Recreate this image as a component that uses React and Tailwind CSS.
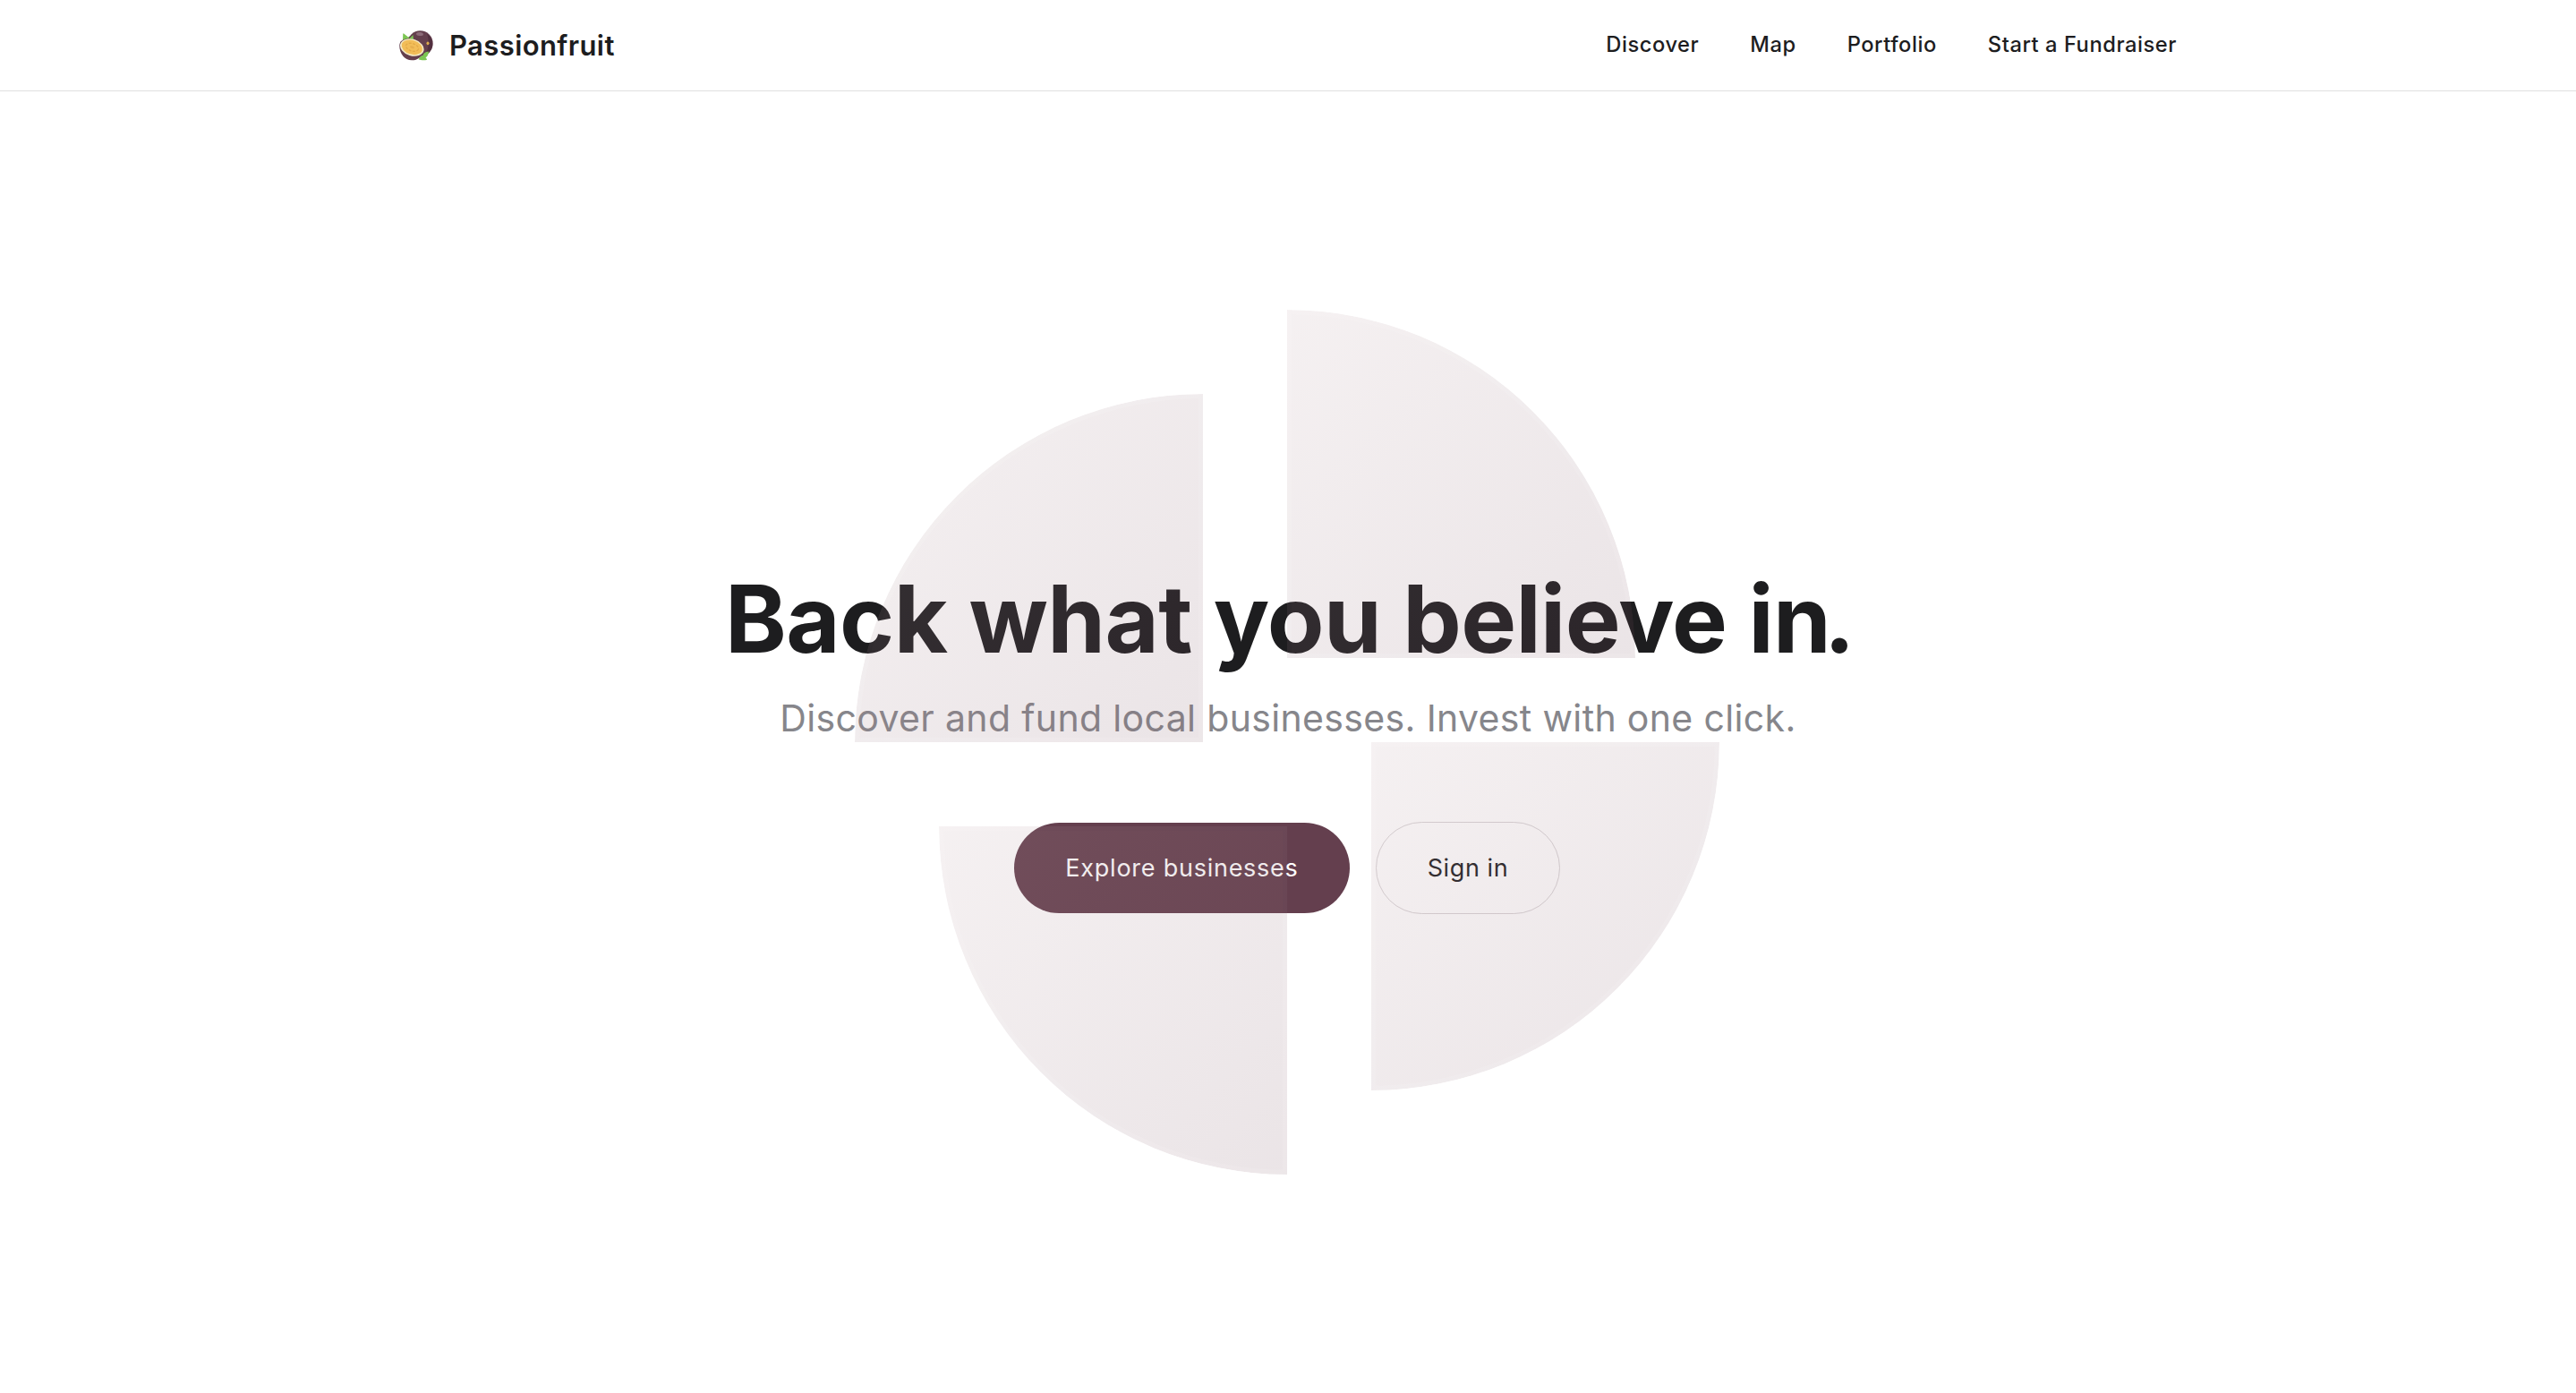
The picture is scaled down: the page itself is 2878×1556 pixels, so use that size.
import React from 'react';

const navLinks = ['Discover', 'Map', 'Portfolio', 'Start a Fundraiser'];

const petals = [
  'M389 483 L389 94 A389 389 0 0 0 0 483 Z',
  'M483 389 L483 0 A389 389 0 0 1 872 389 Z',
  'M577 483 L966 483 A389 389 0 0 1 577 872 Z',
  'M483 577 L483 966 A389 389 0 0 1 94 577 Z',
];

const Logo = () => (
  <svg viewBox="0 0 38 34" className="w-[38px] h-[34px]" fill="none">
    <path d="M4 12 L4.5 3 L10 7.5 L15 4.5 L18 12 Z" fill="#7cc653" />
    <ellipse cx="23.5" cy="14.5" rx="14.2" ry="14.3" fill="#643f4d" />
    <path d="M31 3.5 C40 10 39 23 29 28 C33 20 34 12 31 3.5 Z" fill="#52303f" />
    <ellipse cx="23" cy="4" rx="4" ry="2" fill="#8b6b78" transform="rotate(8 23 4)" />
    <ellipse cx="32" cy="14.3" rx="1.5" ry="1.9" fill="#dba94c" />
    <path d="M4.5 4 C7 5 9.5 7 10.5 10 L15.5 5 L16 12 L4.5 12 Z" fill="#7cc653" />
    <path d="M0.3 17 C0.3 11 6 8.5 13 9.5 C22 11 28.5 17 27 23.5 C25.5 30 20 33.5 14 33.3 C6 33 0.3 26 0.3 17 Z" fill="#643f4d" />
    <ellipse cx="14.3" cy="19" rx="13.6" ry="9.3" fill="#f3eac6" transform="rotate(17 14.3 19)" />
    <ellipse cx="14.3" cy="18.8" rx="12" ry="7.9" fill="#f2bd58" transform="rotate(17 14.3 18.8)" />
    <ellipse cx="14.5" cy="18.8" rx="7.2" ry="4.2" stroke="#e3aa48" strokeWidth="1.3" strokeDasharray="3 1.4" transform="rotate(17 14.5 18.8)" />
    <ellipse cx="14.5" cy="18.8" rx="2.6" ry="1.3" fill="#e6ae4e" transform="rotate(17 14.5 18.8)" />
    <path d="M33 23.5 C32.5 28 31 29.5 29.5 30.5 C31 31.5 31 32.5 31 32.8 C28 33.8 24 33.4 21.5 32.2 C23 30 24 28.5 26.5 28 C27 25.5 29 24 33 23.5 Z" fill="#7cc653" />
  </svg>
);

const Petals = () => (
  <svg viewBox="0 0 966 966" className="absolute top-1/2 left-1/2 w-[966px] h-[966px] -translate-x-[484px] -translate-y-1/2 pointer-events-none" fill="none">
    <defs>
      <linearGradient id="petal" x1="0" y1="0" x2="1" y2="1">
        <stop offset="0" stopColor="#bea2a8" />
        <stop offset="1" stopColor="#7c5463" />
      </linearGradient>
      {petals.map((d, i) => (
        <mask key={d} id={`petal-${i}`} maskUnits="userSpaceOnUse" x="0" y="0" width="966" height="966">
          <path d={d} fill="#fff" />
          <path d={d} stroke="#000" strokeOpacity="0.11" strokeWidth="10" />
        </mask>
      ))}
    </defs>
    {petals.map((d, i) => (
      <path key={d} d={d} mask={`url(#petal-${i})`} fill="url(#petal)" fillOpacity="0.155" />
    ))}
  </svg>
);

const Header = () => (
  <header className="border-b border-[#e0e0e0]">
    <div className="mx-auto flex h-[101px] w-[1986px] items-center justify-between">
      <a href="#" className="flex items-center gap-[18px]">
        <Logo />
        <span className="pb-px text-[31px] leading-none font-semibold tracking-[0.4px]">Passionfruit</span>
      </a>
      <nav className="flex items-center gap-[57px] pb-0.5 text-[23.7px] leading-none font-[450] tracking-[0.55px]">
        {navLinks.map(label => (
          <a key={label} href="#">{label}</a>
        ))}
      </nav>
    </div>
  </header>
);

export default function App() {
  return (
    <div className="flex h-screen flex-col overflow-hidden bg-white text-[#1d1d1f] font-['Inter',sans-serif]">
      <Header />
      <main className="relative flex flex-1 flex-col items-center justify-center pb-2">
        <h1 className="ml-1 text-[104px] leading-[124px] font-bold tracking-[-0.6px]">
          Back what you believe i<span className="tracking-[-8px]">n</span>.
        </h1>
        <p className="mt-[19px] text-[41px] leading-[60px] tracking-[0.35px] text-[#86868b]">Discover and fund local businesses. Invest with one click.</p>
        <div className="mt-[86px] mr-0.5 flex items-center gap-[29px] text-[27px] tracking-[0.6px]">
          <button className="h-[101px] w-[375px] rounded-full bg-[#643f4e] pt-px text-white tracking-[0.75px]">Explore businesses</button>
          <button className="h-[103px] w-[206px] rounded-full border border-[#d9d5d7] pt-px">Sign in</button>
        </div>
        <Petals />
      </main>
    </div>
  );
}
